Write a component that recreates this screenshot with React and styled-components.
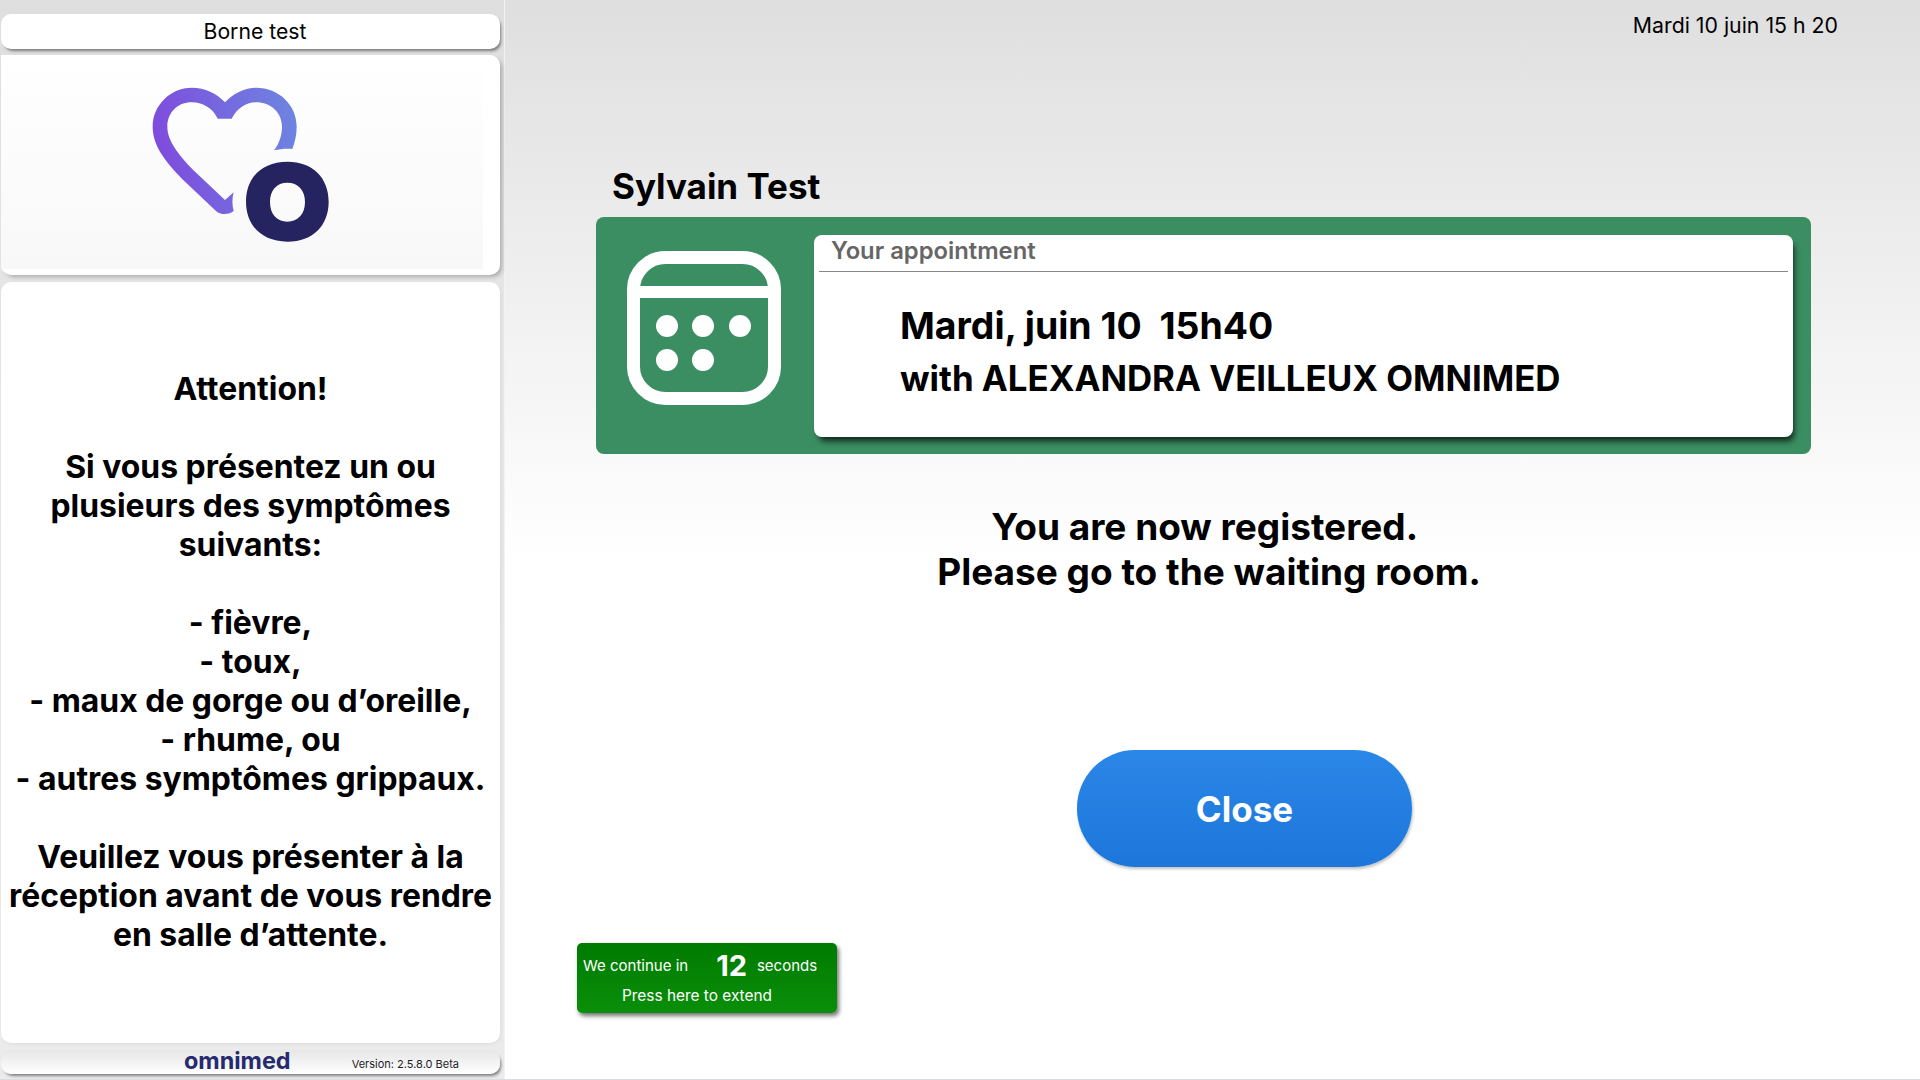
import React from 'react';
import styled, { createGlobalStyle } from 'styled-components';

const GlobalStyle = createGlobalStyle`
  html, body {
    margin: 0;
    padding: 0;
    height: 100%;
    background: #ffffff;
  }
  body {
    font-family: Inter, "Liberation Sans", sans-serif;
    color: #000;
  }
`;

const Page = styled.div`
  display: flex;
  width: 1920px;
  height: 1079px;
  border-bottom: 1px solid #d8dde3;
  overflow: hidden;
`;

const Side = styled.aside`
  flex: 0 0 505px;
  box-sizing: border-box;
  height: 100%;
  padding: 14px 4px 0 1px;
  display: flex;
  flex-direction: column;
  background: linear-gradient(#dedede, #e6e6e6 30%, #ebebeb);
  border-right: 1px solid #f2f2f2;
`;

const Card = styled.div`
  background: #fff;
  border-radius: 10px;
  box-shadow: 3px 3px 4px -1px rgba(0, 0, 0, 0.25);
`;

const StationCard = styled(Card)`
  height: 35px;
  font-size: 21.2px;
  line-height: 35px;
  text-align: center;
  padding-left: 9px;
  box-shadow: 2px 3px 3px -1px rgba(0, 0, 0, 0.45);
`;

const LogoCard = styled(Card)`
  margin-top: 6px;
  height: 220px;
  padding-right: 17px;
  padding-bottom: 6px;
  box-sizing: border-box;
`;

const LogoImage = styled.div`
  height: 100%;
  padding: 15px 0 0 129px;
  box-sizing: border-box;
  background: linear-gradient(#fff, #f8f8f8);
`;

const NoticeCard = styled(Card)`
  margin-top: 7px;
  height: 761px;
  box-sizing: border-box;
  padding-top: 87px;
  text-align: center;
  font-size: 31.9px;
  line-height: 39px;
  font-weight: 700;
  box-shadow: 1px 1px 3px rgba(0, 0, 0, 0.06);
`;

const NoticeGroup = styled.p`
  margin: 0 0 39px;
`;

const FooterCard = styled(Card)`
  margin-top: 7px;
  height: 24px;
  display: flex;
  align-items: flex-start;
  background: linear-gradient(#e6e6e6, #fff);
  box-shadow: 2px 3px 3px -1px rgba(0, 0, 0, 0.45);
`;

const Brand = styled.div`
  margin-left: 183px;
  color: #262a6e;
  font-size: 23.4px;
  font-weight: 700;
  line-height: 22px;
`;

const Version = styled.div`
  margin-left: 61px;
  margin-top: 7px;
  font-size: 11px;
  line-height: 15px;
  color: #1d1d2b;
`;

const Main = styled.main`
  flex: 1;
  display: flex;
  flex-direction: column;
  background: linear-gradient(#dfdfdf, #ffffff 52%);
`;

const Clock = styled.div`
  height: 50px;
  padding: 11px 82px 0 0;
  box-sizing: border-box;
  text-align: right;
  font-size: 21.3px;
  line-height: 28px;
`;

const PatientName = styled.h1`
  margin: 113px 0 0 107px;
  font-size: 35px;
  line-height: 46px;
  font-weight: 700;
  height: 54px;
`;

const GreenPanel = styled.section`
  margin-left: 91px;
  width: 1215px;
  height: 237px;
  box-sizing: border-box;
  padding: 18px 18px 17px 31px;
  display: flex;
  background: #3b8e62;
  border-radius: 8px;
`;

const CalendarIcon = styled.svg`
  flex: 0 0 154px;
  width: 154px;
  height: 154px;
  margin-top: 16px;
`;

const AppointmentCard = styled.div`
  margin-left: 33px;
  flex: 1;
  background: #fff;
  border-radius: 8px;
  padding: 0 5px;
  box-shadow: 3px 6px 6px -2px rgba(0, 0, 0, 0.75);
`;

const AppointmentTitle = styled.div`
  height: 37px;
  box-sizing: border-box;
  border-bottom: 1px solid #888;
  padding-left: 12px;
  font-size: 23.8px;
  line-height: 32px;
  font-weight: 600;
  color: #666;
`;

const AppointmentText = styled.div`
  padding: 28px 0 0 81px;
  font-weight: 700;
  white-space: pre;
`;

const AppointmentLine = styled.div`
  font-size: ${(props) => props.$size}px;
  line-height: 52px;
`;

const Message = styled.div`
  margin: 50px 0 0 0;
  width: 1408px;
  text-align: center;
  font-size: 37px;
  line-height: 45px;
  font-weight: 700;
`;

const CloseButton = styled.button`
  margin: 156px 0 0 572px;
  width: 335px;
  height: 117px;
  border: 0;
  border-radius: 58px;
  background: linear-gradient(#2a86e7, #1d77db);
  box-shadow: 1px 2px 3px rgba(0, 0, 0, 0.25);
  color: #fff;
  font-family: inherit;
  font-size: 35px;
  font-weight: 700;
  cursor: pointer;
`;

const TimerButton = styled.button`
  margin: 76px 0 0 72px;
  width: 260px;
  height: 70px;
  padding: 0;
  border: 0;
  border-radius: 5px;
  display: flex;
  flex-direction: column;
  background: linear-gradient(#007a00, #0a8f0a);
  box-shadow: 2px 3px 4px rgba(0, 0, 0, 0.55);
  color: #fff;
  font-family: inherit;
  cursor: pointer;
`;

const TimerTop = styled.div`
  display: flex;
  align-items: center;
  height: 44px;
  padding-left: 6px;
  font-size: 15px;
`;

const TimerCount = styled.span`
  margin: 0 10px 0 28px;
  font-size: 29px;
  font-weight: 700;
`;

const TimerHint = styled.div`
  width: 100%;
  padding-left: 45px;
  box-sizing: border-box;
  text-align: left;
  font-size: 15.4px;
  line-height: 18px;
`;

const LogoMark = () => (
  <svg width="230" height="190" viewBox="0 0 690 570" aria-label="Omnimed">
    <defs>
      <linearGradient id="heartFill" x1="0" y1="0.35" x2="1" y2="0.2">
        <stop offset="0" stopColor="#7f4bdd" />
        <stop offset="1" stopColor="#6d85e0" />
      </linearGradient>
    </defs>
    <path
      fill="url(#heartFill)"
      d="M285 97C310 70 345 53 378 53C447 53 500 105 500 170C500 195 495 215 487 237C470 235 450 237 432 241C447 222 456 197 456 170C456 128 422 97 378 97C345 97 320 118 305 146L263 146C250 118 222 97 185 97C143 97 112 128 112 170C112 215 150 260 200 310L285 390L311 367C306 385 306 405 311 423C300 432 275 438 258 423L170 340C110 280 68 230 68 170C68 105 122 53 185 53C225 53 260 70 285 97Z"
    />
    <path
      fill="#262460"
      fillRule="evenodd"
      d="M472 275C550 275 596 325 596 395C596 465 550 515 472 515C394 515 348 465 348 395C348 325 394 275 472 275ZM472 338C440 338 420 360 420 396C420 432 440 455 472 455C504 455 525 432 525 396C525 360 504 338 472 338Z"
    />
  </svg>
);

const Calendar = () => (
  <CalendarIcon viewBox="0 0 154 154">
    <rect x="6.5" y="6.5" width="141" height="141" rx="32" fill="none" stroke="#fff" strokeWidth="13" />
    <rect x="13" y="35" width="128" height="12" fill="#fff" />
    {[[40, 75], [76, 75], [113, 75], [40, 109], [76, 109]].map(([cx, cy]) => (
      <ellipse key={`${cx}-${cy}`} cx={cx} cy={cy} rx="11" ry="11" fill="#fff" />
    ))}
  </CalendarIcon>
);

export default function App() {
  return (
    <>
      <GlobalStyle />
      <Page>
        <Side>
          <StationCard>Borne test</StationCard>
          <LogoCard>
            <LogoImage>
              <LogoMark />
            </LogoImage>
          </LogoCard>
          <NoticeCard>
            <NoticeGroup>Attention!</NoticeGroup>
            <NoticeGroup>
              Si vous présentez un ou
              <br />
              plusieurs des symptômes
              <br />
              suivants:
            </NoticeGroup>
            <NoticeGroup>
              - fièvre,
              <br />
              - toux,
              <br />
              - maux de gorge ou d’oreille,
              <br />
              - rhume, ou
              <br />
              - autres symptômes grippaux.
            </NoticeGroup>
            <NoticeGroup>
              Veuillez vous présenter à la
              <br />
              réception avant de vous rendre
              <br />
              en salle d’attente.
            </NoticeGroup>
          </NoticeCard>
          <FooterCard>
            <Brand>omnimed</Brand>
            <Version>Version: 2.5.8.0 Beta</Version>
          </FooterCard>
        </Side>
        <Main>
          <Clock>Mardi 10 juin 15 h 20</Clock>
          <PatientName>Sylvain Test</PatientName>
          <GreenPanel>
            <Calendar />
            <AppointmentCard>
              <AppointmentTitle>Your appointment</AppointmentTitle>
              <AppointmentText>
                <AppointmentLine $size={37.4}>{'Mardi, juin 10  15h40'}</AppointmentLine>
                <AppointmentLine $size={34.85}>with ALEXANDRA VEILLEUX OMNIMED</AppointmentLine>
              </AppointmentText>
            </AppointmentCard>
          </GreenPanel>
          <Message>
            You are now registered.&nbsp;
            <br />
            Please go to the waiting room.
          </Message>
          <CloseButton>Close</CloseButton>
          <TimerButton>
            <TimerTop>
              We continue in
              <TimerCount>12</TimerCount>
              seconds
            </TimerTop>
            <TimerHint>Press here to extend</TimerHint>
          </TimerButton>
        </Main>
      </Page>
    </>
  );
}
